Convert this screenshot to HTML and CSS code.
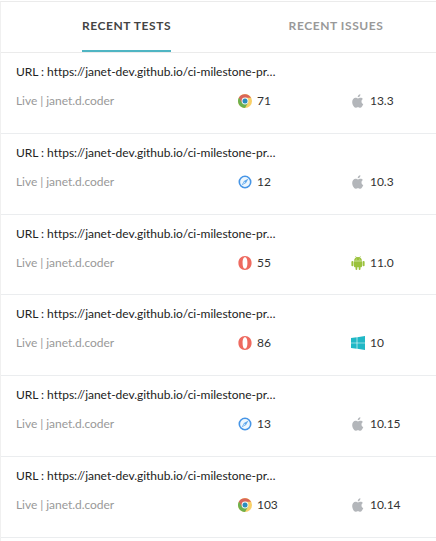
FILE: index.html
```html
<!DOCTYPE html>
<html lang="en">
<head>
<meta charset="utf-8">
<title>Recent Tests</title>
<link rel="stylesheet" href="styles.css">
</head>
<body>
<svg class="sprite" aria-hidden="true">
  <symbol id="chrome" viewBox="0 0 14 14">
    <circle cx="7" cy="7" r="7" fill="#f9d067"/>
    <path d="M7 7 L.94 3.5 A7 7 0 0 0 7 14 L10.03 8.75Z" fill="#6db04e"/>
    <path d="M.94 3.5 A7 7 0 0 1 13.06 3.8 H7 L4 8.7Z" fill="#d9655a"/>
    <circle cx="7" cy="7" r="3.4" fill="#f5f8f8"/>
    <circle cx="7" cy="7" r="2.5" fill="#2b8cbd"/>
  </symbol>
  <symbol id="safari" viewBox="0 0 14 14">
    <circle cx="7" cy="7" r="5.7" fill="#eef7fd" stroke="#4695e6" stroke-width="1.6"/>
    <path d="M10.5 3.5 8 8 3.5 10.5 6 6Z" fill="#5ca6ec"/>
    <path d="M6.5 6.5 7.5 7.5 4.4 9.6Z" fill="#c9e4fa"/>
  </symbol>
  <symbol id="opera" viewBox="0 0 14 14">
    <path fill="#ee6a60" fill-rule="evenodd" d="M7 0C11 0 13.6 3 13.6 7S11 14 7 14 .4 11 .4 7 3 0 7 0ZM7 1.3C5.3 1.3 4.6 4 4.6 7S5.3 12.7 7 12.7 9.4 10 9.4 7 8.7 1.3 7 1.3Z"/>
  </symbol>
  <symbol id="apple" viewBox="0 0 14 14">
    <path fill="#b3b6ba" d="M9.4.2C9.5 1.9 8.2 3.3 6.7 3.3 6.6 1.8 7.8.4 9.4.2ZM11.9 5C10.9 5.6 10.5 6.4 10.5 7.4 10.5 8.7 11.3 9.6 12.3 10 11.7 11.8 10.5 13.8 9.2 13.8 8.3 13.8 8 13.3 6.9 13.3S5.5 13.8 4.7 13.8C3 13.8 1.2 10.7 1.2 8.1 1.2 5.4 2.8 3.8 4.6 3.8 5.6 3.8 6.3 4.4 7 4.4S8.5 3.7 9.6 3.7C10.5 3.7 11.4 4.2 11.9 5Z"/>
  </symbol>
  <symbol id="android" viewBox="0 0 14 14">
    <g fill="#9bc23c">
      <path d="M3 4.7C3.1 3 4 2 5 1.4L4.3.3 4.7 0 5.5 1.2Q7 .7 8.5 1.2L9.3 0 9.7.3 9 1.4C10 2 10.9 3 11 4.7Z"/>
      <path d="M3 5.2H11V10.3Q11 11.2 10.1 11.2H9.5V13.1A.9.9 0 0 1 7.7 13.1V11.2H6.3V13.1A.9.9 0 0 1 4.5 13.1V11.2H3.9Q3 11.2 3 10.3Z"/>
      <rect x=".4" y="5" width="2.1" height="5.2" rx="1"/>
      <rect x="11.5" y="5" width="2.1" height="5.2" rx="1"/>
    </g>
    <circle cx="5.2" cy="3.1" r=".4" fill="#fff"/>
    <circle cx="8.8" cy="3.1" r=".4" fill="#fff"/>
  </symbol>
  <symbol id="windows" viewBox="0 0 14 14">
    <path fill="#20b8c6" d="M0 2.1 5.7 1.3V6.7H0ZM6.3 1.2 14 .1V6.7H6.3ZM0 7.3H5.7V12.7L0 11.9ZM6.3 7.3H14V13.9L6.3 12.8Z"/>
  </symbol>
</svg>
<main class="panel">
  <nav class="tabs">
    <div class="tab"><span class="tab-label active">RECENT TESTS</span></div>
    <div class="tab"><span class="tab-label">RECENT ISSUES</span></div>
  </nav>
  <section class="list">
    <article class="row">
      <div class="url">URL : https://janet-dev.github.io/ci-milestone-pr…</div>
      <div class="meta"><span class="user">Live | janet.d.coder</span><span class="item"><svg class="icon"><use href="#chrome"/></svg>71</span><span class="item"><svg class="icon"><use href="#apple"/></svg>13.3</span></div>
    </article>
    <article class="row">
      <div class="url">URL : https://janet-dev.github.io/ci-milestone-pr…</div>
      <div class="meta"><span class="user">Live | janet.d.coder</span><span class="item"><svg class="icon"><use href="#safari"/></svg>12</span><span class="item"><svg class="icon"><use href="#apple"/></svg>10.3</span></div>
    </article>
    <article class="row">
      <div class="url">URL : https://janet-dev.github.io/ci-milestone-pr…</div>
      <div class="meta"><span class="user">Live | janet.d.coder</span><span class="item"><svg class="icon"><use href="#opera"/></svg>55</span><span class="item"><svg class="icon"><use href="#android"/></svg>11.0</span></div>
    </article>
    <article class="row">
      <div class="url">URL : https://janet-dev.github.io/ci-milestone-pr…</div>
      <div class="meta"><span class="user">Live | janet.d.coder</span><span class="item"><svg class="icon"><use href="#opera"/></svg>86</span><span class="item"><svg class="icon"><use href="#windows"/></svg>10</span></div>
    </article>
    <article class="row">
      <div class="url">URL : https://janet-dev.github.io/ci-milestone-pr…</div>
      <div class="meta"><span class="user">Live | janet.d.coder</span><span class="item"><svg class="icon"><use href="#safari"/></svg>13</span><span class="item"><svg class="icon"><use href="#apple"/></svg>10.15</span></div>
    </article>
    <article class="row">
      <div class="url">URL : https://janet-dev.github.io/ci-milestone-pr…</div>
      <div class="meta"><span class="user">Live | janet.d.coder</span><span class="item"><svg class="icon"><use href="#chrome"/></svg>103</span><span class="item"><svg class="icon"><use href="#apple"/></svg>10.14</span></div>
    </article>
  </section>
</main>
</body>
</html>
```
FILE: styles.css
```css
* { box-sizing: border-box; }
body {
  margin: 0;
  background: #fff;
  color: #333;
  font: 12px/18px Lato, "Liberation Sans", sans-serif;
  overflow: hidden;
}
.sprite { display: none; }
.panel {
  height: 541px;
  margin-top: 1px;
  border-top: 1px solid #ebebeb;
  border-left: 1px solid #f0f0f0;
}
.tabs {
  display: grid;
  grid-template-columns: 251px 168px;
  height: 51px;
  border-bottom: 1px solid #ebebeb;
}
.tab { display: flex; justify-content: center; }
.tab-label {
  height: 50px;
  padding-top: 15px;
  color: #999;
  font-weight: 700;
  letter-spacing: .57px;
  white-space: nowrap;
}
.active { color: #444; border-bottom: 2px solid #4fb5c3; }
.row {
  height: 80.8px;
  padding: 10px 15px 0;
  border-bottom: 1px solid #ebedef;
}
.url { color: #222; letter-spacing: -.03px; white-space: nowrap; }
.meta {
  display: grid;
  grid-template-columns: 222px 113px 70px;
  margin-top: 11px;
}
.user { color: #999; letter-spacing: -.04px; }
.item { display: flex; align-items: center; gap: 5px; letter-spacing: -.04px; }
.icon { width: 14px; height: 14px; }
```
